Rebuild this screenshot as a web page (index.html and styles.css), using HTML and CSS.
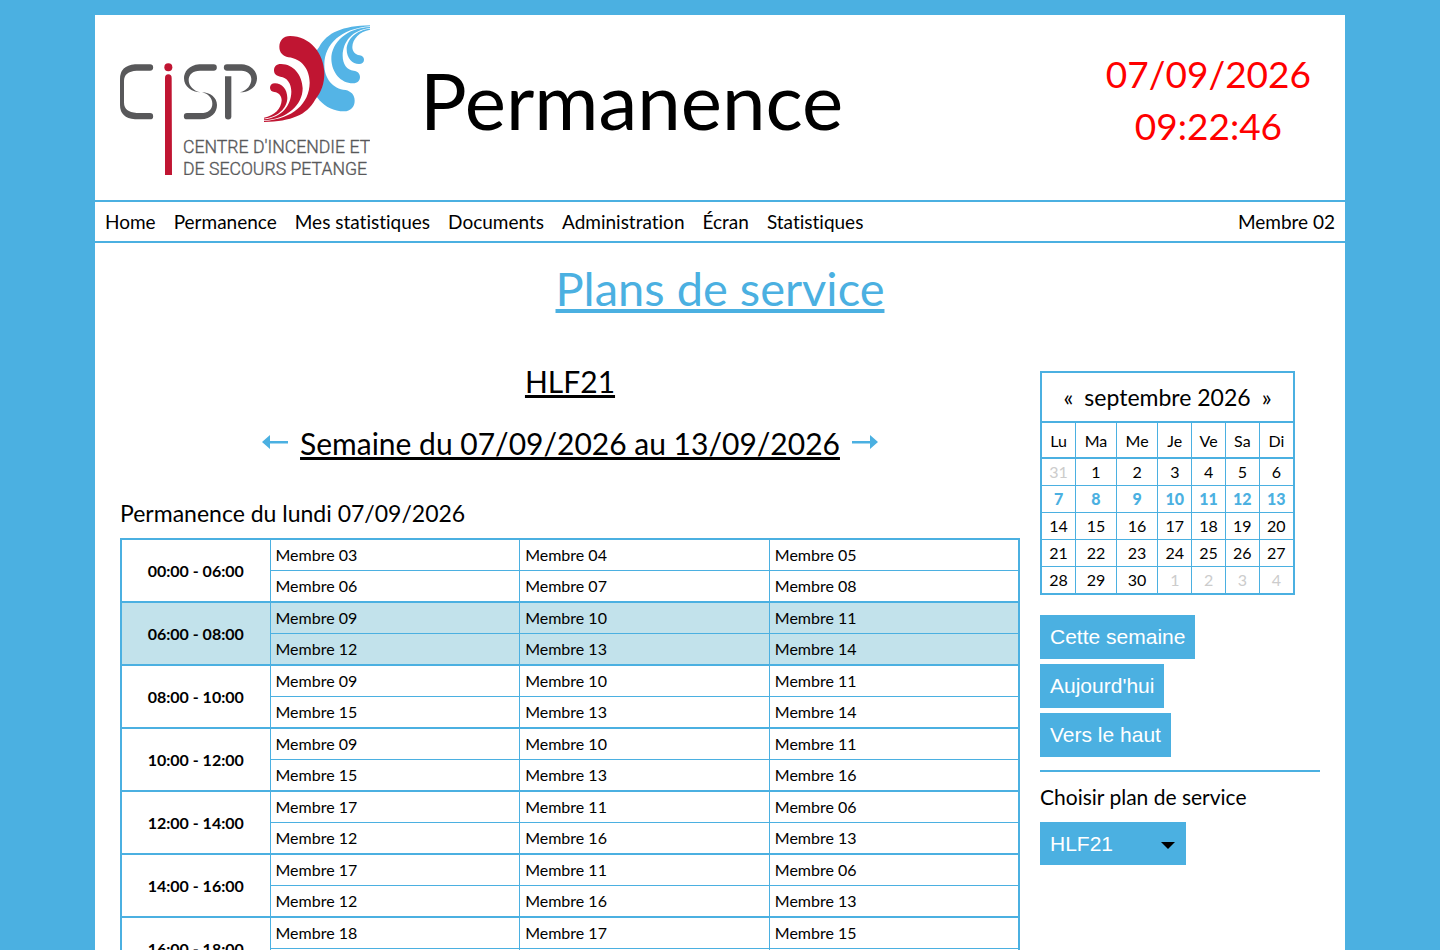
FILE: index.html
```html
<!DOCTYPE html>
<html lang="fr">

<head>
    <meta charset="UTF-8">
    <meta name="viewport" content="width=device-width, initial-scale=1.0">
    <title>CISP - Permanence</title>
    <link rel="stylesheet" href="styles.css">
</head>

<body>
    <div class="page" id="top">
        <header class="header">
            <svg class="logo" viewBox="30 30 750 450" role="img" aria-label="CISP">
                <defs>
                    <g id="flame">
                        <path d="M27 306C110 304 155 285 180 240C200 215 208 190 208 160C207 100 165 48 105 48C85 48 73 62 73 80C73 98 84 108 100 112C140 116 164 148 164 188C163 250 115 296 27 303Z" />
                        <path d="M27 301C95 299 143 255 143 205C142 165 115 132 78 132C64 132 57 140 57 151C57 162 64 168 76 170C96 172 109 190 109 215C108 258 80 292 27 298Z" />
                        <path d="M27 296C68 292 97 264 97 234C97 207 80 190 60 190C50 190 45 196 45 203C45 210 50 215 58 216C72 218 80 228 80 241C79 266 58 288 27 293Z" />
                    </g>
                </defs>
                <g fill="#58585a">
                    <path d="M120 148H75Q30 152 30 192V270Q30 309 75 313H120a9 9 0 0 0 0-19H80Q42 292 42 262V198Q42 169 80 167H120a9 9 0 0 0 0-19Z" />
                    <path d="M311 148H268C236 150 222 172 222 190C222 215 245 232 272 232C250 228 236 212 236 195C236 179 248 167 270 167H311a9 9 0 0 0 0-19Z" />
                    <path d="M231 313H272C305 312 321 292 321 270C321 248 300 232 276 232C295 236 307 250 307 266C307 283 295 294 272 294H231a9 9 0 0 0 0 19Z" />
                    <path d="M351 148H395C425 150 441 170 441 190C441 215 420 231 390 232C412 226 424 210 424 192C424 178 412 167 395 167H351a9 9 0 0 1 0-19Z" />
                    <path d="M345 184H364V304a9 9 0 0 1-19 0Z" />
                </g>
                <g fill="#c01532">
                    <circle cx="175" cy="157" r="12" />
                    <path d="M165 480V189a10 11 0 0 1 20 0L186 480Z" />
                </g>
                <use href="#flame" fill="#54b4e6" transform="translate(807 337) rotate(180)" />
                <use href="#flame" fill="#c01532" transform="translate(435 15)" />
                <text class="logo-text" x="219" y="414">CENTRE D'INCENDIE ET</text>
                <text class="logo-text" x="219" y="479">DE SECOURS PETANGE</text>
            </svg>
            <div class="site-title">Permanence</div>
            <div class="clock">07/09/2026<br>09:22:46</div>
        </header>

        <nav class="menu">
            <a href="#">Home</a>
            <a href="#">Permanence</a>
            <a href="#">Mes statistiques</a>
            <a href="#">Documents</a>
            <a href="#">Administration</a>
            <a href="#">Écran</a>
            <a href="#">Statistiques</a>
            <a href="#" class="user">Membre 02</a>
        </nav>

        <main>
            <h1>Plans de service</h1>
            <div class="content">
                <section class="plan">
                    <h2>HLF21</h2>
                    <div class="week">
                        <a href="#" aria-label="Semaine précédente">
                            <svg class="arrow" viewBox="0 0 26 16"><path d="M0 7L8 0V6H26V8.500H8V14Z" /></svg>
                        </a>
                        <h2>Semaine du 07/09/2026 au 13/09/2026</h2>
                        <a href="#" aria-label="Semaine suivante">
                            <svg class="arrow" viewBox="0 0 26 16"><path d="M26 7L18 0V6H0V8.500H18V14Z" /></svg>
                        </a>
                    </div>

                    <h3>Permanence du lundi 07/09/2026</h3>
                    <table class="shifts">
                        <tbody>
                            <tr><th rowspan="2">00:00 - 06:00</th><td>Membre 03</td><td>Membre 04</td><td>Membre 05</td></tr>
                            <tr><td>Membre 06</td><td>Membre 07</td><td>Membre 08</td></tr>
                        </tbody>
                        <tbody class="mine">
                            <tr><th rowspan="2">06:00 - 08:00</th><td>Membre 09</td><td>Membre 10</td><td>Membre 11</td></tr>
                            <tr><td>Membre 12</td><td>Membre 13</td><td>Membre 14</td></tr>
                        </tbody>
                        <tbody>
                            <tr><th rowspan="2">08:00 - 10:00</th><td>Membre 09</td><td>Membre 10</td><td>Membre 11</td></tr>
                            <tr><td>Membre 15</td><td>Membre 13</td><td>Membre 14</td></tr>
                        </tbody>
                        <tbody>
                            <tr><th rowspan="2">10:00 - 12:00</th><td>Membre 09</td><td>Membre 10</td><td>Membre 11</td></tr>
                            <tr><td>Membre 15</td><td>Membre 13</td><td>Membre 16</td></tr>
                        </tbody>
                        <tbody>
                            <tr><th rowspan="2">12:00 - 14:00</th><td>Membre 17</td><td>Membre 11</td><td>Membre 06</td></tr>
                            <tr><td>Membre 12</td><td>Membre 16</td><td>Membre 13</td></tr>
                        </tbody>
                        <tbody>
                            <tr><th rowspan="2">14:00 - 16:00</th><td>Membre 17</td><td>Membre 11</td><td>Membre 06</td></tr>
                            <tr><td>Membre 12</td><td>Membre 16</td><td>Membre 13</td></tr>
                        </tbody>
                        <tbody>
                            <tr><th rowspan="2">16:00 - 18:00</th><td>Membre 18</td><td>Membre 17</td><td>Membre 15</td></tr>
                            <tr><td>Membre 12</td><td>Membre 16</td><td>Membre 13</td></tr>
                        </tbody>
                    </table>
                </section>

                <aside class="sidebar">
                    <table class="calendar">
                        <thead>
                            <tr class="month">
                                <th colspan="7"><a href="#" class="step">«</a><a href="#">septembre 2026</a><a href="#" class="step">»</a></th>
                            </tr>
                            <tr class="days"><th>Lu</th><th>Ma</th><th>Me</th><th>Je</th><th>Ve</th><th>Sa</th><th>Di</th></tr>
                        </thead>
                        <tbody>
                            <tr><td class="other">31</td><td>1</td><td>2</td><td>3</td><td>4</td><td>5</td><td>6</td></tr>
                            <tr class="current"><td>7</td><td>8</td><td>9</td><td>10</td><td>11</td><td>12</td><td>13</td></tr>
                            <tr><td>14</td><td>15</td><td>16</td><td>17</td><td>18</td><td>19</td><td>20</td></tr>
                            <tr><td>21</td><td>22</td><td>23</td><td>24</td><td>25</td><td>26</td><td>27</td></tr>
                            <tr><td>28</td><td>29</td><td>30</td><td class="other">1</td><td class="other">2</td><td class="other">3</td><td class="other">4</td></tr>
                        </tbody>
                    </table>

                    <div class="buttons">
                        <button type="button">Cette semaine</button>
                        <button type="button">Aujourd'hui</button>
                        <button type="button">Vers le haut</button>
                    </div>

                    <form class="chooser">
                        <label for="plan">Choisir plan de service</label>
                        <div class="select">
                            <select id="plan">
                                <option>HLF21</option>
                            </select>
                        </div>
                    </form>
                </aside>
            </div>
        </main>
    </div>
</body>

</html>
```
FILE: styles.css
```css
* {
    box-sizing: border-box;
}

body {
    margin: 0;
    padding: 15px;
    background-color: #4bb0e1;
    color: #000;
    font-family: Optima, Lato, sans-serif;
    font-size: 16px;
    font-variant-ligatures: none;
}

a {
    color: inherit;
    text-decoration: none;
}

.page {
    max-width: 1250px;
    margin: 0 auto;
    background-color: #fff;
}

/* header */
.header {
    display: flex;
    align-items: flex-start;
    padding: 10px 25px 25px;
}

.logo {
    width: 250px;
    height: 150px;
}

.logo-text {
    font-family: Roboto, sans-serif;
    font-weight: 300;
    font-size: 53px;
    fill: #58585a;
    stroke: #58585a;
    stroke-width: 1px;
}

.site-title {
    margin-left: 50px;
    font-size: 78px;
    line-height: 150px;
}

.clock {
    margin-left: auto;
    padding: 23px 9px 0 0;
    color: #f00;
    font-size: 37px;
    line-height: 52px;
    text-align: center;
}

/* menu */
.menu {
    display: flex;
    gap: 18px;
    padding: 0 10px;
    border-top: 2px solid #4bb0e1;
    border-bottom: 2px solid #4bb0e1;
    font-size: 19px;
    line-height: 39px;
}

.menu .user {
    margin-left: auto;
}

/* content */
main {
    padding: 15px 25px 25px;
}

h1,
h2,
h3 {
    margin: 0;
    font-weight: normal;
}

h1 {
    margin-bottom: 42px;
    color: #4bb0e1;
    font-size: 47px;
    line-height: 60px;
    text-align: center;
    text-decoration: underline;
}

.content {
    display: flex;
    align-items: flex-start;
    gap: 20px;
}

.plan {
    flex: 1;
}

h2 {
    font-size: 30px;
    line-height: 42px;
    text-align: center;
    text-decoration: underline;
}

.week {
    display: flex;
    justify-content: center;
    align-items: center;
    gap: 12px;
    margin: 20px 0 34px;
}

.arrow {
    display: block;
    width: 26px;
    height: 16px;
    fill: #4bb0e1;
}

h3 {
    margin-bottom: 10px;
    font-size: 23px;
    line-height: 30px;
}

table {
    border-collapse: collapse;
    border: 2px solid #4bb0e1;
}

th,
td {
    border: 1px solid #4bb0e1;
}

.shifts {
    width: 100%;
    table-layout: fixed;
}

.shifts tbody {
    border: 2px solid #4bb0e1;
}

.shifts th {
    width: 149px;
}

.shifts td {
    height: 31px;
    padding: 0 5px;
}

.shifts tr:last-child td {
    height: 32px;
}

.shifts .mine {
    background-color: #c2e2eb;
}

/* sidebar */
.sidebar {
    width: 280px;
    margin-top: 11px;
}

.calendar {
    width: 255px;
    text-align: center;
}

.calendar th {
    padding: 0;
    font-weight: normal;
}

.calendar tr {
    height: 27px;
}

.calendar td {
    padding: 0;
}

.calendar tbody tr:last-child {
    height: 28px;
}

.calendar .month,
.calendar .days {
    border-bottom: 2px solid #4bb0e1;
}

.calendar .month {
    height: 50px;
    font-size: 23px;
}

.calendar .days {
    height: 36px;
}

.step {
    padding: 0 11px;
}

.other {
    color: #ccc;
}

.current {
    color: #4bb0e1;
    font-weight: 900;
}

.buttons {
    display: flex;
    flex-direction: column;
    align-items: flex-start;
    gap: 5px;
    padding: 20px 0 13px;
    border-bottom: 2px solid #4bb0e1;
}

button,
select {
    height: 44px;
    padding: 0 10px;
    border: none;
    border-radius: 0;
    background-color: #4bb0e1;
    color: #fff;
    font-family: "Liberation Sans", Arial, sans-serif;
    font-size: 21px;
    cursor: pointer;
}

.chooser label {
    display: block;
    margin: 10px 0;
    font-size: 21px;
    line-height: 30px;
}

.select {
    position: relative;
    width: 146px;
}

.select select {
    width: 100%;
    height: 43px;
    appearance: none;
}

/* drop-down arrow */
.select::after {
    content: "";
    position: absolute;
    top: 20px;
    right: 11px;
    border: 7px solid transparent;
    border-top-color: #000;
    border-bottom: none;
    pointer-events: none;
}
```
